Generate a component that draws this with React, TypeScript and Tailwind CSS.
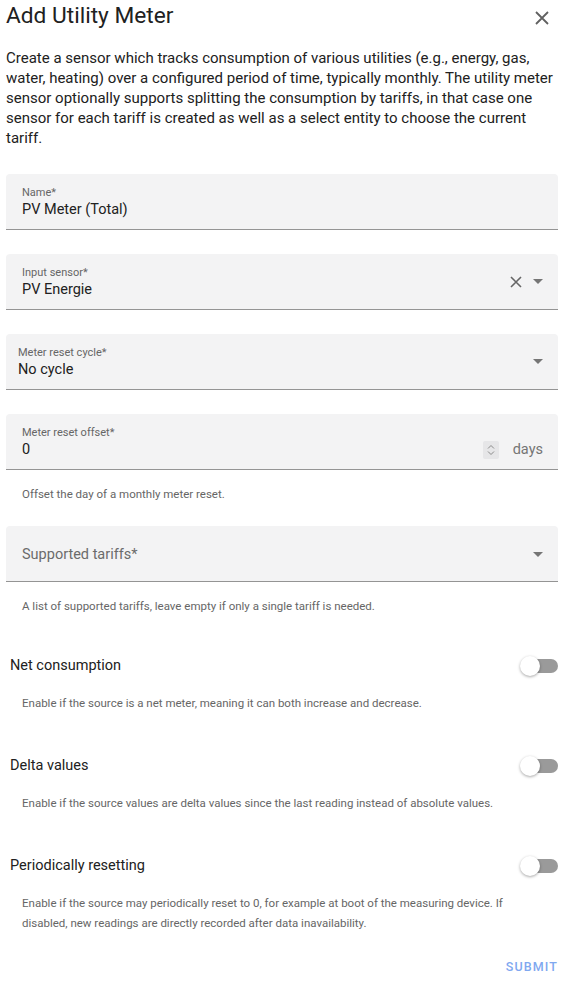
import React from 'react';

const font = { fontFamily: 'Roboto, "Liberation Sans", sans-serif' };

const Caret = () => (
  <svg width="10" height="5" viewBox="0 0 10 5" className="shrink-0">
    <path d="M0 0 L10 0 L5 5 Z" fill="#757575" />
  </svg>
);

const Field = ({
  label,
  value,
  padX = 'px-4',
  right,
}: {
  label: string;
  value: string;
  padX?: string;
  right?: React.ReactNode;
}) => (
  <div className={`h-[56px] bg-[#f3f3f4] rounded-t-[4px] border-b border-[#949494] flex items-center ${padX} pr-[15px]`}>
    <div className="flex-1 flex flex-col pt-[3px]">
      <span className="text-[11px] leading-[14px] text-[#666666]">{label}</span>
      <span className="text-[14.5px] leading-[20px] text-[#212121]">{value}</span>
    </div>
    {right}
  </div>
);

const Helper = ({ children, className = '' }: { children: React.ReactNode; className?: string }) => (
  <p className={`px-4 text-[11.5px] leading-[20px] text-[#666666] ${className}`}>{children}</p>
);

const Toggle = ({ label, className = '' }: { label: string; className?: string }) => (
  <div className={`h-[40px] flex items-center justify-between pl-[4px] pt-[2px] ${className}`}>
    <span className="text-[14.5px] text-[#212121]">{label}</span>
    <div className="relative w-[38px] h-[20px] flex items-center">
      <div className="ml-[2px] w-[36px] h-[14px] rounded-full bg-[#9a9a9a]" />
      <div className="absolute left-0 top-0 w-[20px] h-[20px] rounded-full bg-white shadow-[0_1px_3px_rgba(0,0,0,0.35)]" />
    </div>
  </div>
);

export default function App() {
  return (
    <div className="w-[567px] min-h-[986px] bg-white pl-[6px] pr-[9px]" style={font}>
      <div className="h-[32px] flex items-center justify-between">
        <h1 className="text-[22.7px] text-[#212121]">Add Utility Meter</h1>
        <svg width="14" height="14" viewBox="0 0 14 14" className="mr-[9px] mt-[4px]">
          <path d="M1 1 L13 13 M13 1 L1 13" stroke="#616161" strokeWidth="1.8" />
        </svg>
      </div>

      <p className="mt-[16px] text-[15px] leading-[20px] text-[#212121]">
        Create a sensor which tracks consumption of various utilities (e.g., energy, gas, water, heating) over a
        configured period of time, typically monthly. The utility meter sensor optionally supports splitting the
        consumption by tariffs, in that case one sensor for each tariff is created as well as a select entity to
        choose the current tariff.
      </p>

      <div className="mt-[26px]">
        <Field label="Name*" value="PV Meter (Total)" />
      </div>

      <div className="mt-6">
        <Field
          label="Input sensor*"
          value="PV Energie"
          right={
            <div className="flex items-center gap-[11px]">
              <svg width="12" height="12" viewBox="0 0 12 12">
                <path d="M1 1 L11 11 M11 1 L1 11" stroke="#666666" strokeWidth="1.6" />
              </svg>
              <Caret />
            </div>
          }
        />
      </div>

      <div className="mt-6">
        <Field label="Meter reset cycle*" value="No cycle" padX="px-3" right={<Caret />} />
      </div>

      <div className="mt-6">
        <Field
          label="Meter reset offset*"
          value="0"
          right={
            <div className="flex items-center gap-[14px] mt-[16px]">
              <div className="w-[16px] h-[18px] bg-[#e6e6e8] rounded-[2px] flex items-center justify-center">
                <svg width="8" height="12" viewBox="0 0 8 12">
                  <path d="M1 4.5 L4 1.5 L7 4.5 M1 7.5 L4 10.5 L7 7.5" stroke="#8a8a8a" strokeWidth="1" fill="none" />
                </svg>
              </div>
              <span className="text-[14.5px] text-[#757575]">days</span>
            </div>
          }
        />
      </div>
      <Helper className="mt-[14px]">Offset the day of a monthly meter reset.</Helper>

      <div className="mt-[22px] h-[56px] bg-[#f3f3f4] rounded-t-[4px] border-b border-[#949494] flex items-center justify-between pl-4 pr-[15px] pt-[2px]">
        <span className="text-[14.5px] text-[#6b6b6b]">Supported tariffs*</span>
        <Caret />
      </div>
      <Helper className="mt-[14px]">A list of supported tariffs, leave empty if only a single tariff is needed.</Helper>

      <Toggle label="Net consumption" className="mt-[29px]" />
      <Helper className="mt-[8px]">Enable if the source is a net meter, meaning it can both increase and decrease.</Helper>

      <Toggle label="Delta values" className="mt-[32px]" />
      <Helper className="mt-[8px]">
        Enable if the source values are delta values since the last reading instead of absolute values.
      </Helper>

      <Toggle label="Periodically resetting" className="mt-[32px]" />
      <Helper className="mt-[8px]">
        Enable if the source may periodically reset to 0, for example at boot of the measuring device. If disabled,
        new readings are directly recorded after data inavailability.
      </Helper>

      <div className="mt-[16px] h-[36px] flex items-center justify-end">
        <button className="text-[12.5px] font-medium tracking-[1.1px] text-[#7fa8f0]">SUBMIT</button>
      </div>
    </div>
  );
}
